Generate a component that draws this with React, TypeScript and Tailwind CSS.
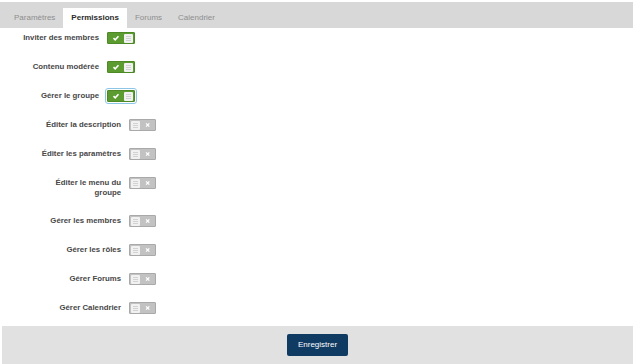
import { useState } from 'react'

type Perm = {
  label: string
  on: boolean
  focus?: boolean
}

const topPerms: Perm[] = [
  { label: 'Inviter des membres', on: true },
  { label: 'Contenu modérée', on: true },
  { label: 'Gérer le groupe', on: true, focus: true },
]

const otherPerms: Perm[] = [
  { label: 'Éditer la description', on: false },
  { label: 'Éditer les paramètres', on: false },
  { label: 'Éditer le menu du groupe', on: false },
  { label: 'Gérer les membres', on: false },
  { label: 'Gérer les rôles', on: false },
  { label: 'Gérer Forums', on: false },
  { label: 'Gérer Calendrier', on: false },
]

const tabs = ['Paramètres', 'Permissions', 'Forums', 'Calendrier']

function Knob() {
  return (
    <span className="flex h-[9px] w-[9px] flex-col items-center justify-center gap-[1px] rounded-[1px] bg-[#f1f1f1]">
      <span className="h-px w-[5px] bg-[#d2d2d2]" />
      <span className="h-px w-[5px] bg-[#d2d2d2]" />
      <span className="h-px w-[5px] bg-[#d2d2d2]" />
    </span>
  )
}

function Toggle({ on, focus }: { on: boolean; focus?: boolean }) {
  if (on) {
    return (
      <span
        className={`flex h-[12px] w-[28px] shrink-0 items-center justify-between rounded-[1px] border border-[#4d8a25] bg-[#5b9b2f] pr-px ${
          focus ? 'outline outline-1 outline-offset-1 outline-[#8cc6e7]' : ''
        }`}
      >
        <svg width="16" height="10" viewBox="0 0 16 10">
          <path d="M5.5 5.2 L7.2 6.8 L10.5 3.2" fill="none" stroke="#fff" strokeWidth="1.6" />
        </svg>
        <Knob />
      </span>
    )
  }
  return (
    <span className="flex h-[12px] w-[27px] shrink-0 items-center justify-between rounded-[1px] border border-[#a9a9a9] bg-[#c2c2c2] pl-px">
      <Knob />
      <svg width="16" height="10" viewBox="0 0 16 10">
        <path d="M6.3 3.3 L9.7 6.7 M9.7 3.3 L6.3 6.7" fill="none" stroke="#fff" strokeWidth="1.4" />
      </svg>
    </span>
  )
}

function Row({ perm, indent }: { perm: Perm; indent: string }) {
  return (
    <div className={`flex items-start gap-[8px] ${indent}`}>
      <span className="mt-px w-[86px] text-right text-[7.8px] font-bold leading-[10px] text-[#474747]">
        {perm.label}
      </span>
      <Toggle on={perm.on} focus={perm.focus} />
    </div>
  )
}

export default function App() {
  const [active, setActive] = useState('Permissions')

  return (
    <div className="h-[364px] w-[640px] overflow-hidden bg-white font-['Liberation_Sans',Arial,sans-serif]">
      <div className="w-[633px]">
        <div className="mt-[2px] flex h-[26px] items-end bg-[#d8d8d8] pl-[6px]">
          {tabs.map((tab) => (
            <button
              key={tab}
              onClick={() => setActive(tab)}
              className={`flex h-[20px] items-center px-2 text-[8px] ${
                active === tab ? 'bg-white font-bold text-[#2b2b2b]' : 'text-[#8e8e8e]'
              }`}
            >
              {tab}
            </button>
          ))}
        </div>

        <div className="flex flex-col gap-[17px] pt-[4px]">
          {topPerms.map((p) => (
            <Row key={p.label} perm={p} indent="pl-[13px]" />
          ))}
          {otherPerms.map((p) => (
            <Row key={p.label} perm={p} indent="pl-[35px]" />
          ))}
        </div>

        <div className="ml-[2px] mt-[12px] flex h-[40px] justify-center bg-[#e1e1e1] pt-[8px]">
          <button className="h-[22px] rounded-[2px] bg-[#0f3a62] px-[11px] text-[8px] text-white">
            Enregistrer
          </button>
        </div>
      </div>
    </div>
  )
}
